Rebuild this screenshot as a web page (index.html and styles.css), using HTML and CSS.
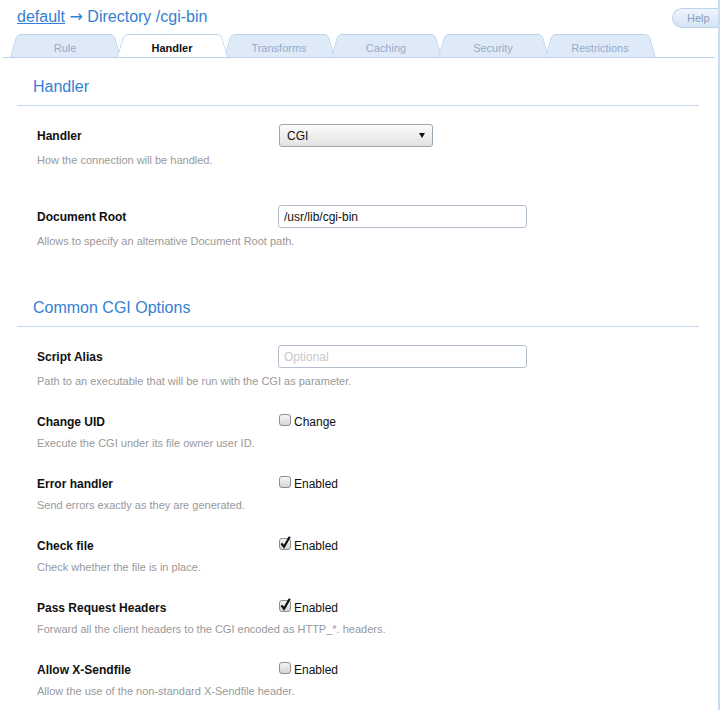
FILE: index.html
```html
<!DOCTYPE html>
<html lang="en">
<head>
<meta charset="utf-8">
<title>default → Directory /cgi-bin</title>
<link rel="stylesheet" href="styles.css">
</head>
<body>
<div class="page">
  <header class="top">
    <h1 class="title"><a href="#">default</a> <span class="arrow">→</span> Directory /cgi-bin</h1>
    <button class="help" type="button">Help</button>
  </header>

  <nav class="tabs">
    <a class="tab" href="#">Rule</a>
    <a class="tab tab-active" href="#">Handler</a>
    <a class="tab" href="#">Transforms</a>
    <a class="tab" href="#">Caching</a>
    <a class="tab" href="#">Security</a>
    <a class="tab" href="#">Restrictions</a>
  </nav>

  <section class="section">
    <h2 class="section-head">Handler</h2>
    <div class="fields fields-loose">
      <div class="field">
        <label class="field-label">Handler</label>
        <div class="field-control">
          <span class="select-wrap"><select class="select"><option>CGI</option></select></span>
        </div>
        <p class="field-desc">How the connection will be handled.</p>
      </div>
      <div class="field">
        <label class="field-label">Document Root</label>
        <div class="field-control"><input class="text-input" type="text" value="/usr/lib/cgi-bin"></div>
        <p class="field-desc">Allows to specify an alternative Document Root path.</p>
      </div>
    </div>
  </section>

  <section class="section">
    <h2 class="section-head">Common CGI Options</h2>
    <div class="fields">
      <div class="field">
        <label class="field-label">Script Alias</label>
        <div class="field-control"><input class="text-input" type="text" placeholder="Optional"></div>
        <p class="field-desc">Path to an executable that will be run with the CGI as parameter.</p>
      </div>
      <div class="field field-check">
        <label class="field-label">Change UID</label>
        <label class="check">
          <svg class="box" width="13" height="14" viewBox="0 0 13 14"><defs><linearGradient id="g1" x1="0" y1="0" x2="0" y2="1"><stop offset="0" stop-color="#f7f7f7"/><stop offset="1" stop-color="#d4d4d4"/></linearGradient></defs><rect x="0.5" y="2.5" width="11" height="11" rx="2.5" fill="url(#g1)" stroke="#8f8f8f"/></svg>
          <span>Change</span>
        </label>
        <p class="field-desc">Execute the CGI under its file owner user ID.</p>
      </div>
      <div class="field field-check">
        <label class="field-label">Error handler</label>
        <label class="check">
          <svg class="box" width="13" height="14" viewBox="0 0 13 14"><rect x="0.5" y="2.5" width="11" height="11" rx="2.5" fill="url(#g1)" stroke="#8f8f8f"/></svg>
          <span>Enabled</span>
        </label>
        <p class="field-desc">Send errors exactly as they are generated.</p>
      </div>
      <div class="field field-check">
        <label class="field-label">Check file</label>
        <label class="check">
          <svg class="box" width="13" height="14" viewBox="0 0 13 14"><rect x="0.5" y="2.5" width="11" height="11" rx="2.5" fill="url(#g1)" stroke="#8f8f8f"/><path d="M2.4 7.4 L5 10.8 L10.8 0.8" fill="none" stroke="#111" stroke-width="2.2"/></svg>
          <span>Enabled</span>
        </label>
        <p class="field-desc">Check whether the file is in place.</p>
      </div>
      <div class="field field-check">
        <label class="field-label">Pass Request Headers</label>
        <label class="check">
          <svg class="box" width="13" height="14" viewBox="0 0 13 14"><rect x="0.5" y="2.5" width="11" height="11" rx="2.5" fill="url(#g1)" stroke="#8f8f8f"/><path d="M2.4 7.4 L5 10.8 L10.8 0.8" fill="none" stroke="#111" stroke-width="2.2"/></svg>
          <span>Enabled</span>
        </label>
        <p class="field-desc">Forward all the client headers to the CGI encoded as HTTP_*. headers.</p>
      </div>
      <div class="field field-check">
        <label class="field-label">Allow X-Sendfile</label>
        <label class="check">
          <svg class="box" width="13" height="14" viewBox="0 0 13 14"><rect x="0.5" y="2.5" width="11" height="11" rx="2.5" fill="url(#g1)" stroke="#8f8f8f"/></svg>
          <span>Enabled</span>
        </label>
        <p class="field-desc">Allow the use of the non-standard X-Sendfile header.</p>
      </div>
    </div>
  </section>
</div>
</body>
</html>
```

FILE: styles.css
```css
html, body {
  margin: 0;
  padding: 0;
  background: #fff;
}

html {
  overflow: hidden;
}

body {
  width: 718px;
  height: 710px;
  overflow: hidden;
  border-right: 2px solid #c9dcf1;
  font-family: "Liberation Sans", Arial, sans-serif;
  color: #111;
}

.top {
  display: flex;
  align-items: flex-start;
  height: 34px;
}

.title {
  margin: 0;
  padding: 7px 0 0 17px;
  font-size: 16px;
  line-height: 20px;
  font-weight: normal;
  color: #3480d4;
}

.title a {
  color: inherit;
  text-decoration: underline;
}

.arrow {
  font-family: "DejaVu Sans", sans-serif;
  font-size: 16px;
}

.help {
  margin: 8px 0 0 auto;
  width: 46px;
  height: 20px;
  padding: 0 0 0 14px;
  border: 1px solid #bcd3ee;
  border-right: none;
  border-radius: 10px 0 0 10px;
  background: linear-gradient(#eef4fc, #d5e4f6);
  color: #8b9db8;
  font-family: "Liberation Sans", Arial, sans-serif;
  font-size: 11px;
  text-align: left;
}

.tabs {
  display: flex;
  height: 23px;
  margin: 0 3px;
  padding-left: 7px;
  border-bottom: 1px solid #bcd3ee;
}

.tab {
  position: relative;
  z-index: 0;
  flex: none;
  width: 110px;
  margin-right: -3px;
  display: flex;
  align-items: center;
  justify-content: center;
  padding-top: 4px;
  box-sizing: border-box;
  font-size: 11px;
  color: #94aac9;
  text-decoration: none;
}

.tab::before,
.tab::after {
  content: "";
  position: absolute;
  top: 0;
  bottom: 0;
  width: 55%;
  background: #dfeaf8;
  border-top: 1px solid #bcd3ee;
  z-index: -1;
}

.tab::before {
  left: 0;
  border-left: 1px solid #bcd3ee;
  border-top-left-radius: 5px;
  transform: skewX(-16deg);
  transform-origin: bottom left;
}

.tab::after {
  right: 0;
  border-right: 1px solid #bcd3ee;
  border-top-right-radius: 5px;
  transform: skewX(16deg);
  transform-origin: bottom right;
}

.tab-active {
  z-index: 1;
  color: #111;
  font-weight: bold;
}

.tab-active::before,
.tab-active::after {
  background: #fff;
}

.section {
  margin-bottom: 50px;
}

.section:last-child {
  margin-bottom: 0;
}

.section-head {
  margin: 19px 19px 0 17px;
  padding: 0 0 8px 16px;
  border-bottom: 1px solid #c9d9ea;
  font-size: 16px;
  line-height: 20px;
  font-weight: normal;
  color: #3480d4;
}

.section + .section .section-head {
  margin-top: 0;
}

.fields {
  padding: 18px 0 0 37px;
}

.field {
  display: grid;
  grid-template-columns: 241px auto;
  align-items: center;
  row-gap: 6px;
  margin-bottom: 27px;
}

.fields-loose .field {
  margin-bottom: 38px;
}

.fields .field:last-child {
  margin-bottom: 0;
}

.field-check {
  row-gap: 7px;
}

.field-label {
  font-size: 12px;
  line-height: 14px;
  font-weight: bold;
  color: #111;
}

.field-desc {
  grid-column: 1 / -1;
  margin: 0;
  font-size: 11px;
  line-height: 14px;
  color: #999;
}

.select-wrap {
  position: relative;
  display: inline-block;
  margin-left: 1px;
}

.select-wrap::after {
  content: "";
  position: absolute;
  right: 8px;
  top: 9px;
  border-left: 3px solid transparent;
  border-right: 3px solid transparent;
  border-top: 5px solid #111;
  pointer-events: none;
}

.select {
  appearance: none;
  -webkit-appearance: none;
  display: block;
  width: 154px;
  height: 23px;
  margin: 0;
  padding: 0 0 0 7px;
  border: 1px solid #9ba6b3;
  border-radius: 3px;
  background: linear-gradient(#fbfbfb, #e2e2e2);
  font-family: "Liberation Sans", Arial, sans-serif;
  font-size: 12px;
  color: #111;
}

.text-input {
  display: block;
  box-sizing: border-box;
  width: 249px;
  height: 23px;
  margin: 0;
  padding: 0 5px;
  border: 1px solid #b3bfcc;
  border-radius: 3px;
  background: #fff;
  font-family: "Liberation Sans", Arial, sans-serif;
  font-size: 12px;
  color: #111;
}

.text-input::placeholder {
  color: #c8c8c8;
}

.check {
  display: flex;
  align-items: flex-start;
  height: 14px;
  margin-left: 1px;
  gap: 2px;
  font-size: 12px;
  line-height: 14px;
  color: #111;
}

.check .box {
  flex: none;
  margin-top: -3px;
  overflow: visible;
}
```
